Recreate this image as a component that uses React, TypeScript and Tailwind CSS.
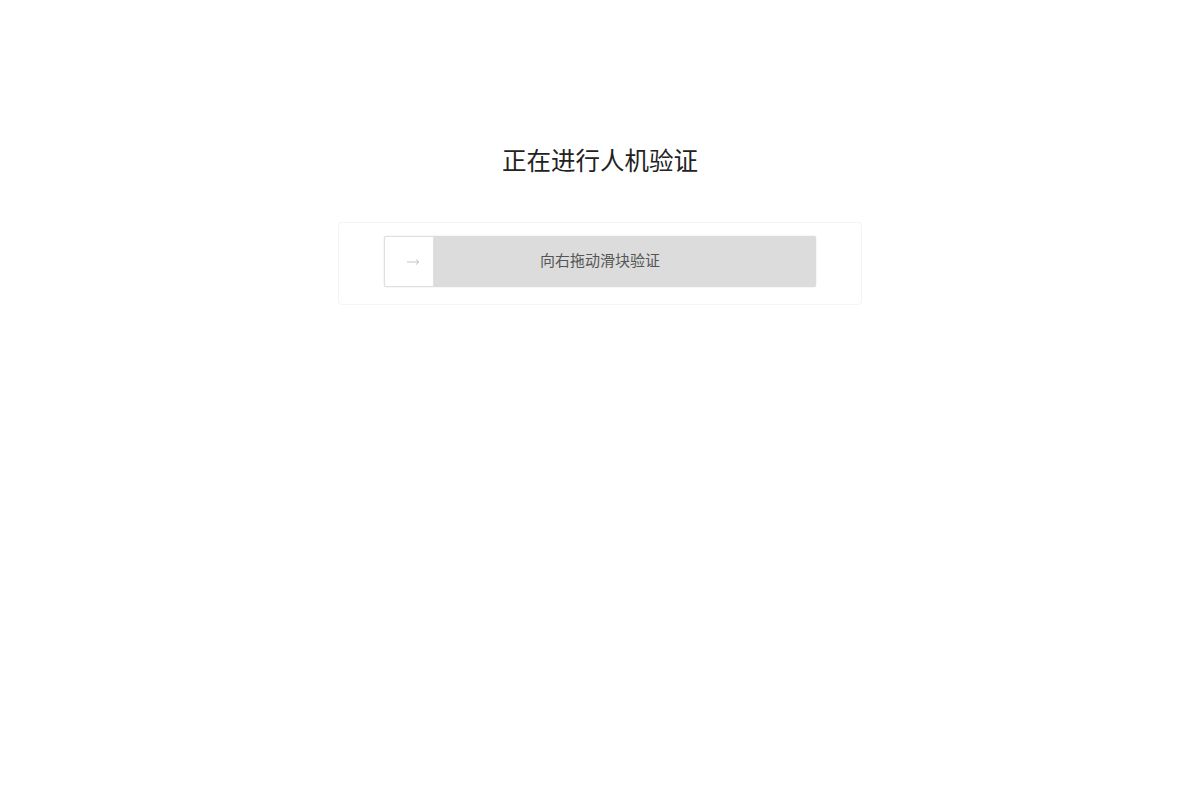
import React from "react";

export default function App() {
  return (
    <div
      className="min-h-[800px] w-full bg-white flex flex-col items-center pt-[146px]"
      style={{ fontFamily: '"Liberation Sans", Arial, "Noto Sans CJK SC", sans-serif' }}
    >
      <h1 className="text-[24.5px] leading-[32px] text-[#222] font-normal">正在进行人机验证</h1>
      <div className="mt-[44px] w-[524px] h-[83px] rounded-[4px] border border-[#f4f4f4] bg-white flex justify-center pt-[13px]">
        <div className="relative w-[432px] h-[51px] rounded-[2px] bg-[#dcdcdc] shadow-[0_0_2px_rgba(0,0,0,0.12)] flex items-center justify-center">
          <div className="absolute left-0 top-0 h-full w-[50px] bg-white border border-[#e0e0e0] rounded-l-[2px] flex items-center justify-center pl-[9px]">
            <svg width="13" height="8" viewBox="0 0 13 8" fill="none" stroke="#c4c4c4" strokeWidth="1">
              <path d="M0 4h12M9 1.5l3 2.5-3 2.5" />
            </svg>
          </div>
          <span className="text-[15px] text-[#555]">向右拖动滑块验证</span>
        </div>
      </div>
    </div>
  );
}
